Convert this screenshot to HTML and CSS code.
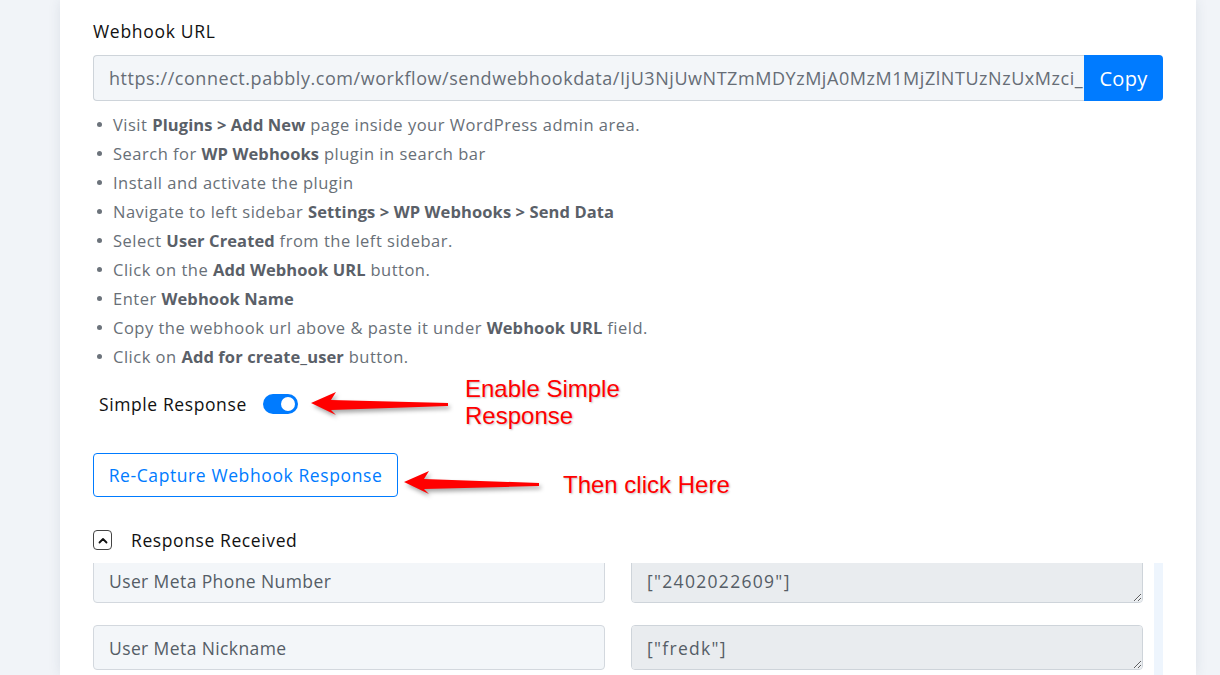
FILE: index.html
```html
<!DOCTYPE html>
<html lang="en">
<head>
<meta charset="utf-8">
<title>Webhook URL</title>
<link rel="stylesheet" href="styles.css">
</head>
<body>
<div class="page">
  <main class="card">
    <div class="field">
      <div class="label">Webhook URL</div>
      <div class="input-group">
        <div class="url-input">https://connect.pabbly.com/workflow/sendwebhookdata/IjU3NjUwNTZmMDYzMjA0MzM1MjZlNTUzNzUxMzci_</div>
        <button class="copy-btn">Copy</button>
      </div>
    </div>

    <ul class="steps">
      <li>Visit <b>Plugins &gt; Add New</b> page inside your WordPress admin area.</li>
      <li>Search for <b>WP Webhooks</b> plugin in search bar</li>
      <li>Install and activate the plugin</li>
      <li>Navigate to left sidebar <b>Settings &gt; WP Webhooks &gt; Send Data</b></li>
      <li>Select <b>User Created</b> from the left sidebar.</li>
      <li>Click on the <b>Add Webhook URL</b> button.</li>
      <li>Enter <b>Webhook Name</b></li>
      <li>Copy the webhook url above &amp; paste it under <b>Webhook URL</b> field.</li>
      <li>Click on <b>Add for create_user</b> button.</li>
    </ul>

    <div class="toggle-row">
      <span class="toggle-label">Simple Response</span>
      <span class="toggle"><span class="knob"></span></span>
      <svg class="arrow arrow-1" width="144" height="32" viewBox="0 0 144 32">
        <polygon points="3,15 28,4 23,12 140,15 140,18 23,22 28,27" fill="#ff0000"/>
      </svg>
      <span class="note note-1">Enable Simple<br>Response</span>
    </div>

    <div class="recapture-row">
      <button class="recapture-btn">Re-Capture Webhook Response</button>
      <svg class="arrow arrow-2" width="144" height="32" viewBox="0 0 144 32">
        <polygon points="3,14 28,3 23,11 138,15 138,18 23,21 28,26" fill="#ff0000"/>
      </svg>
      <span class="note note-2">Then click Here</span>
    </div>

    <div class="response-head">
      <span class="chevron-box">
        <svg width="10" height="7" viewBox="0 0 10 7"><path d="M1.5 5.5 L5 2 L8.5 5.5" fill="none" stroke="#111" stroke-width="1.8" stroke-linecap="round" stroke-linejoin="round"/></svg>
      </span>
      <span class="response-title">Response Received</span>
    </div>

    <div class="response-scroll">
      <div class="response-grid">
        <div class="key-box">User Meta Phone Number</div>
        <textarea class="value-box" readonly>["2402022609"]</textarea>
        <div class="key-box">User Meta Nickname</div>
        <textarea class="value-box" readonly>["fredk"]</textarea>
      </div>
      <div class="scroll-track"></div>
    </div>
  </main>
</div>
</body>
</html>
```

FILE: styles.css
```css
* { box-sizing: border-box; }

html, body {
  margin: 0;
  padding: 0;
  height: 675px;
  overflow: hidden;
  background: #f1f4f8;
  font-family: "Open Sans", Lato, sans-serif;
}

.page {
  display: flex;
  height: 675px;
}

.card {
  margin-left: 60px;
  width: 1136px;
  height: 675px;
  background: #ffffff;
  box-shadow: 0 0 12px rgba(40, 60, 90, 0.10);
  padding: 19px 33px 0 33px;
}

.label {
  font-size: 17.5px;
  letter-spacing: 0.7px;
  line-height: 24px;
  color: #111;
}

.input-group {
  margin-top: 12px;
  display: flex;
  height: 46px;
}

.url-input {
  flex: 1;
  min-width: 0;
  background: #f3f6f9;
  border: 1px solid #ced4da;
  border-right: none;
  border-radius: 4px 0 0 4px;
  padding: 0 0 0 15px;
  font-size: 18px;
  letter-spacing: 0.55px;
  line-height: 44px;
  color: #666d76;
  white-space: nowrap;
  overflow: hidden;
}

.copy-btn {
  width: 79px;
  border: none;
  background: #007bff;
  color: #fff;
  font-family: inherit;
  font-size: 20px;
  letter-spacing: 0.3px;
  border-radius: 0 4px 4px 0;
  padding: 0;
}

.steps {
  list-style: none;
  margin: 9px 0 0 0;
  padding: 0;
}

.steps li {
  position: relative;
  padding-left: 20px;
  font-size: 16.5px;
  letter-spacing: 0.5px;
  line-height: 29px;
  color: #686f77;
}

.steps li::before {
  content: "";
  position: absolute;
  left: 4px;
  top: 12px;
  width: 5px;
  height: 5px;
  border-radius: 50%;
  background: #6c737b;
}

.steps b {
  color: #5a6068;
  font-weight: 700;
  letter-spacing: 0.1px;
}

.toggle-row {
  margin-top: 13px;
  height: 40px;
  display: flex;
  align-items: center;
  padding-left: 6px;
}

.toggle-label {
  font-size: 17.5px;
  letter-spacing: 0.6px;
  color: #111;
  width: 164px;
}

.toggle {
  width: 35px;
  height: 20px;
  border-radius: 10px;
  background: #007bff;
  display: flex;
  align-items: center;
  justify-content: flex-end;
  padding-right: 3px;
}

.knob {
  width: 14px;
  height: 14px;
  border-radius: 50%;
  background: #fff;
}

.arrow {
  filter: drop-shadow(2px 3px 2px rgba(0, 0, 0, 0.35));
  flex: none;
}

.arrow-1 { margin-left: 10px; }

.note {
  font-family: "Liberation Sans", Arial, sans-serif;
  font-size: 24px;
  line-height: 27px;
  color: #ff0000;
  text-shadow: 1px 1px 2px rgba(0, 0, 0, 0.25);
}

.note-1 {
  margin-left: 13px;
  margin-top: -4px;
}

.recapture-row {
  margin-top: 29px;
  height: 44px;
  display: flex;
  align-items: flex-start;
}

.recapture-btn {
  height: 44px;
  width: 305px;
  border: 1px solid #007bff;
  border-radius: 4px;
  background: #fff;
  color: #007bff;
  font-family: inherit;
  font-size: 17.5px;
  letter-spacing: 0.6px;
  padding: 0;
}

.arrow-2 { margin-left: 3px; margin-top: 15px; }

.note-2 {
  margin-left: 18px;
  margin-top: 18px;
}

.response-head {
  margin-top: 31px;
  display: flex;
  align-items: center;
  height: 24px;
}

.chevron-box {
  width: 19px;
  height: 20px;
  border: 1px solid #444;
  border-radius: 4px;
  display: flex;
  align-items: center;
  justify-content: center;
}

.response-title {
  margin-left: 19px;
  font-size: 17.5px;
  letter-spacing: 0.6px;
  color: #111;
}

.response-scroll {
  margin-top: 11px;
  height: 120px;
  overflow: hidden;
  display: flex;
}

.response-grid {
  margin-top: -5px;
  width: 1050px;
  display: grid;
  grid-template-columns: 512px 512px;
  column-gap: 26px;
  row-gap: 22px;
  grid-auto-rows: 45px;
}

.key-box {
  background: #f3f6f9;
  border: 1px solid #d3d8de;
  border-radius: 4px;
  padding: 10px 15px;
  font-size: 17.5px;
  letter-spacing: 0.4px;
  line-height: 24px;
  color: #555d66;
}

.value-box {
  background: #e9ecef;
  border: 1px solid #ced4da;
  border-radius: 4px;
  padding: 10px 15px;
  font-family: inherit;
  font-size: 17.5px;
  letter-spacing: 1.3px;
  line-height: 24px;
  color: #555d66;
  height: 45px;
  width: 512px;
  margin: 0;
  outline: none;
}

.scroll-track {
  margin-left: 11px;
  width: 9px;
  background: #eef5fd;
}
```
